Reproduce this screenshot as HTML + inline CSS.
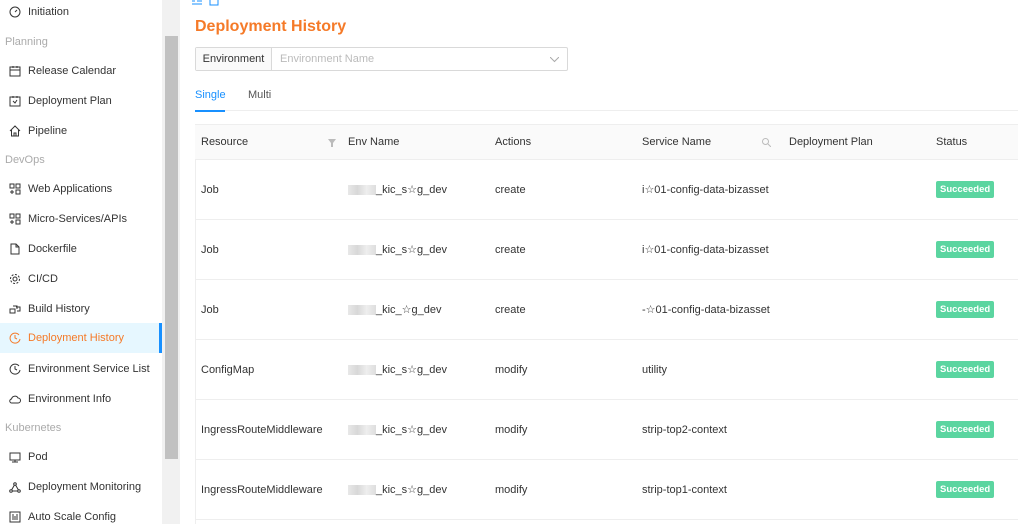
<!DOCTYPE html>
<html><head><style>
*{margin:0;padding:0;box-sizing:border-box}
body{width:1018px;height:524px;overflow:hidden;background:#fff;font-family:"Liberation Sans",sans-serif;font-size:11px;color:#333;position:relative}
.sb{position:absolute;left:0;top:0;width:162px;height:524px;background:#fff}
.it{position:absolute;left:0;width:162px;height:30px;line-height:30px;padding-left:28px;color:#333}
.it svg{position:absolute;left:9px;top:9px;width:12px;height:12px}
.grp{position:absolute;left:5px;color:#aaa;height:30px;line-height:30px}
.act{background:#e6f7ff;color:#f57a28;border-right:3px solid #1890ff}
.track{position:absolute;left:162px;top:0;width:18px;height:524px;background:#f1f1f1}
.thumb{position:absolute;left:165px;top:36px;width:13px;height:423px;background:#c1c1c1}
.abs{position:absolute}
table{position:absolute;left:195px;top:124px;width:882px;border-collapse:collapse;table-layout:fixed}
td,th{height:60px;border-bottom:1px solid #eee;text-align:left;padding-left:6px;font-weight:normal;width:147px;white-space:nowrap;overflow:hidden;position:relative}
th{height:35px;background:#fafafa;border-top:1px solid #eee;overflow:visible}
.tag{display:inline-block;background:#5bd5a0;color:#fff;font-size:9.5px;font-weight:bold;padding:0 4px;height:17px;line-height:17px;border-radius:2px}
.blur{display:inline-block;width:28px;height:10px;background:linear-gradient(90deg,#e8e8e8,#d8d8d8,#eee,#ddd);vertical-align:middle}
</style></head><body>
<div class="sb">
<div class="it" style="top:-3px"><svg viewBox="0 0 12 12" fill="none" stroke="#333"><circle cx="6" cy="6" r="5"/><path d="M6 6l2-2"/></svg>Initiation</div>
<div class="grp" style="top:27px">Planning</div>
<div class="it" style="top:56px"><svg viewBox="0 0 12 12" fill="none" stroke="#333"><rect x="1" y="2" width="10" height="9"/><path d="M1 5h10M4 1v2M8 1v2"/></svg>Release Calendar</div>
<div class="it" style="top:86px"><svg viewBox="0 0 12 12" fill="none" stroke="#333"><rect x="1" y="2" width="10" height="9"/><path d="M4 6l2 2 2-3M4 1v2M8 1v2"/></svg>Deployment Plan</div>
<div class="it" style="top:116px"><svg viewBox="0 0 12 12" fill="none" stroke="#333"><path d="M1 6l5-5 5 5M2.5 5v6h7V5M5 11V8h2v3"/></svg>Pipeline</div>
<div class="grp" style="top:145px">DevOps</div>
<div class="it" style="top:174px"><svg viewBox="0 0 12 12" fill="none" stroke="#333"><path d="M7 1h4v4H7zM7 7h4v4H7zM1 1h4v4H1zM3 7v4M1 9h4"/></svg>Web Applications</div>
<div class="it" style="top:204px"><svg viewBox="0 0 12 12" fill="none" stroke="#333"><path d="M7 1h4v4H7zM7 7h4v4H7zM1 1h4v4H1zM3 7v4M1 9h4"/></svg>Micro-Services/APIs</div>
<div class="it" style="top:234px"><svg viewBox="0 0 12 12" fill="none" stroke="#333"><path d="M2 1h5l3 3v7H2zM7 1v3h3"/></svg>Dockerfile</div>
<div class="it" style="top:264px"><svg viewBox="0 0 12 12" fill="none" stroke="#333"><circle cx="6" cy="6" r="2"/><circle cx="6" cy="6" r="4.5" stroke-dasharray="2 1.5"/></svg>CI/CD</div>
<div class="it" style="top:294px"><svg viewBox="0 0 12 12" fill="none" stroke="#333"><path d="M1 6h5v4H1zM4 3h4v3M7 4h4v4H8"/></svg>Build History</div>
<div class="it act" style="top:323px;line-height:31px"><svg viewBox="0 0 12 12" fill="none" stroke="#f57a28"><path d="M10 3A5 5 0 1 0 11 7"/><path d="M6 3v3l2 1"/></svg>Deployment History</div>
<div class="it" style="top:354px"><svg viewBox="0 0 12 12" fill="none" stroke="#333"><path d="M10 3A5 5 0 1 0 11 7"/><path d="M6 3v3l2 1"/></svg>Environment Service List</div>
<div class="it" style="top:384px"><svg viewBox="0 0 12 12" fill="none" stroke="#333"><path d="M3 10h6a2.5 2.5 0 0 0 0-5A3.5 3.5 0 0 0 2.5 6 2 2 0 0 0 3 10z"/></svg>Environment Info</div>
<div class="grp" style="top:413px">Kubernetes</div>
<div class="it" style="top:442px"><svg viewBox="0 0 12 12" fill="none" stroke="#333"><rect x="1" y="2" width="10" height="7"/><path d="M6 9v2M3 11h6"/></svg>Pod</div>
<div class="it" style="top:472px"><svg viewBox="0 0 12 12" fill="none" stroke="#333"><circle cx="6" cy="3" r="1.3"/><circle cx="2" cy="10" r="1.3"/><circle cx="10" cy="10" r="1.3"/><path d="M5.3 4.2L2.7 8.8M6.7 4.2l2.6 4.6M3.3 10h5.4"/></svg>Deployment Monitoring</div>
<div class="it" style="top:502px"><svg viewBox="0 0 12 12" fill="none" stroke="#333"><rect x="1" y="1" width="10" height="10"/><path d="M4 3v6M6 5v4M8 3v6"/></svg>Auto Scale Config</div>
</div>
<div class="track"></div><div class="thumb"></div>
<svg class="abs" style="left:192px;top:0" width="30" height="6" fill="none" stroke="#1890ff"><path d="M0 1h3M5 1h5M0 4h10"/><rect x="18" y="-2" width="8" height="7"/></svg>
<div class="abs" style="left:195px;top:18px;font-size:16px;font-weight:bold;color:#f57a28">Deployment History</div>
<div class="abs" style="left:195px;top:47px;width:373px;height:24px;border:1px solid #d9d9d9;border-radius:2px">
<div class="abs" style="left:0;top:0;width:76px;height:22px;background:#fafafa;border-right:1px solid #d9d9d9;line-height:22px;text-align:center">Environment</div>
<div class="abs" style="left:84px;top:0;line-height:22px;color:#bbb">Environment Name</div>
<svg class="abs" style="left:354px;top:9px" width="9" height="6" fill="none" stroke="#aaa"><path d="M0 0l4.5 4.5L9 0"/></svg>
</div>
<div class="abs" style="left:195px;top:89px;color:#1890ff">Single</div>
<div class="abs" style="left:248px;top:89px;color:#555">Multi</div>
<div class="abs" style="left:195px;top:110px;width:823px;height:1px;background:#eee"></div>
<div class="abs" style="left:195px;top:110px;width:30px;height:2px;background:#1890ff"></div>
<div class="abs" style="left:195px;top:124px;width:1px;height:400px;background:#eee"></div>
<table>
<colgroup><col style="width:147px"><col style="width:147px"><col style="width:147px"><col style="width:147px"><col style="width:147px"><col style="width:147px"></colgroup>
<tr><th>Resource<svg style="position:absolute;left:133px;top:14px" width="8" height="8"><path d="M0 0h8L5 4v4H3V4z" fill="#bbb"/></svg></th><th>Env Name</th><th>Actions</th><th>Service Name<svg style="position:absolute;left:126px;top:13px" width="9" height="9" fill="none" stroke="#bbb"><circle cx="3.5" cy="3.5" r="3"/><path d="M6 6l3 3"/></svg></th><th>Deployment Plan</th><th>Status</th></tr>
<tr><td>Job</td><td><span class="blur"></span>_kic_s☆g_dev</td><td>create</td><td>i☆01-config-data-bizasset</td><td></td><td><span class="tag">Succeeded</span></td></tr>
<tr><td>Job</td><td><span class="blur"></span>_kic_s☆g_dev</td><td>create</td><td>i☆01-config-data-bizasset</td><td></td><td><span class="tag">Succeeded</span></td></tr>
<tr><td>Job</td><td><span class="blur"></span>_kic_☆g_dev</td><td>create</td><td>-☆01-config-data-bizasset</td><td></td><td><span class="tag">Succeeded</span></td></tr>
<tr><td>ConfigMap</td><td><span class="blur"></span>_kic_s☆g_dev</td><td>modify</td><td>utility</td><td></td><td><span class="tag">Succeeded</span></td></tr>
<tr><td>IngressRouteMiddleware</td><td><span class="blur"></span>_kic_s☆g_dev</td><td>modify</td><td>strip-top2-context</td><td></td><td><span class="tag">Succeeded</span></td></tr>
<tr><td>IngressRouteMiddleware</td><td><span class="blur"></span>_kic_s☆g_dev</td><td>modify</td><td>strip-top1-context</td><td></td><td><span class="tag">Succeeded</span></td></tr>
</table>
</body></html>
